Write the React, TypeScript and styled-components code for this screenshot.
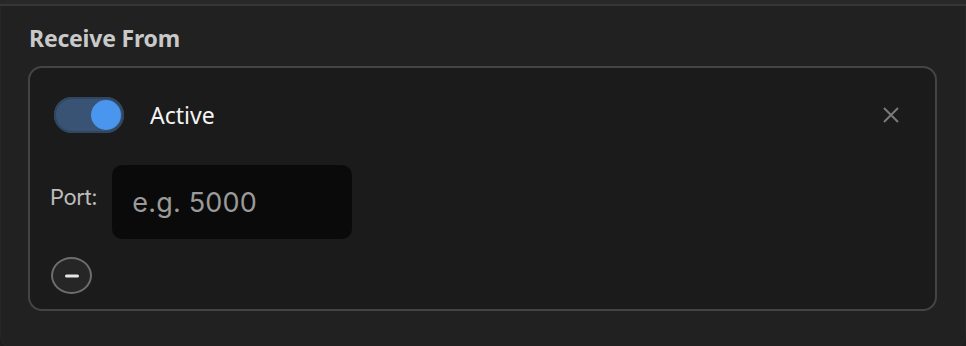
import styled, { createGlobalStyle } from "styled-components";

const Global = createGlobalStyle`
  html, body {
    margin: 0;
    padding: 0;
    background: #1e1e1e;
    font-family: "Noto Sans", "Open Sans", sans-serif;
  }
`;

const TopStrip = styled.div`
  height: 4px;
  background: #282828;
  border-bottom: 2px solid #363636;
`;

const Panel = styled.section`
  background: #212121;
  border: 1px solid #262626;
  border-top: none;
  border-radius: 0 0 18px 18px;
  padding: 18px 28px 40px 27px;
  min-height: 330px;
  box-sizing: border-box;
`;

const Title = styled.h2`
  margin: 0 0 14px 1px;
  font-family: "Noto Sans", sans-serif;
  font-size: 23px;
  font-weight: 700;
  color: #c9c9c9;
  line-height: 28px;
  letter-spacing: -0.2px;
`;

const Card = styled.div`
  border: 2px solid #444;
  border-radius: 14px;
  background: #1b1b1b;
  padding: 29px 32px 15px 24px;
  display: flex;
  flex-direction: column;
  height: 245px;
  box-sizing: border-box;
`;

const Header = styled.div`
  display: flex;
  align-items: center;
  gap: 26px;
`;

const Track = styled.div<{ $on: boolean }>`
  width: 70px;
  height: 36px;
  border-radius: 18px;
  background: ${(p) => (p.$on ? "#385373" : "#3a3a3a")};
  box-shadow: inset 0 0 0 2px #30475f;
  display: flex;
  align-items: center;
  justify-content: ${(p) => (p.$on ? "flex-end" : "flex-start")};
  padding: 0 3px;
  box-sizing: border-box;
`;

const Knob = styled.div`
  width: 30px;
  height: 30px;
  border-radius: 50%;
  background: #4a95ee;
`;

const Label = styled.span`
  font-size: 23px;
  color: #f4f4f4;
  flex: 1;
`;

const CloseButton = styled.button`
  background: none;
  border: none;
  padding: 0;
  width: 24px;
  height: 24px;
  display: flex;
  align-items: center;
  justify-content: center;
  cursor: pointer;
`;

const FieldRow = styled.div`
  display: flex;
  align-items: center;
  gap: 15px;
  margin-top: 32px;
  margin-left: -4px;
`;

const FieldLabel = styled.label`
  font-family: "Inter", sans-serif;
  font-size: 22px;
  letter-spacing: -0.4px;
  color: #bdbdbd;
  margin-top: -10px;
`;

const Input = styled.input`
  width: 240px;
  height: 74px;
  box-sizing: border-box;
  background: #0a0a0a;
  border: none;
  border-radius: 10px;
  padding: 0 20px;
  font-family: "Inter", sans-serif;
  font-size: 27px;
  letter-spacing: 0.2px;
  color: #ddd;
  outline: none;
  &::placeholder {
    color: #9a9a9a;
  }
`;

const RemoveButton = styled.button`
  margin-top: 18px;
  margin-left: -3px;
  width: 41px;
  height: 41px;
  border-radius: 50%;
  border: 2px solid #6d6d6d;
  background: #262626;
  display: flex;
  align-items: center;
  justify-content: center;
  padding: 0;
  cursor: pointer;
`;

export default function App() {
  return (
    <>
      <Global />
      <TopStrip />
      <Panel>
        <Title>Receive From</Title>
        <Card>
          <Header>
            <Track $on>
              <Knob />
            </Track>
            <Label>Active</Label>
            <CloseButton aria-label="Remove">
              <svg width="18" height="18" viewBox="0 0 18 18">
                <path d="M2 2L16 16M16 2L2 16" stroke="#7a7a7a" strokeWidth="2" />
              </svg>
            </CloseButton>
          </Header>
          <FieldRow>
            <FieldLabel>Port:</FieldLabel>
            <Input placeholder="e.g. 5000" />
          </FieldRow>
          <RemoveButton aria-label="Remove port">
            <svg width="16" height="4" viewBox="0 0 16 4">
              <rect x="1" y="0.5" width="14" height="3" rx="1.5" fill="#e6e6e6" />
            </svg>
          </RemoveButton>
        </Card>
      </Panel>
    </>
  );
}
